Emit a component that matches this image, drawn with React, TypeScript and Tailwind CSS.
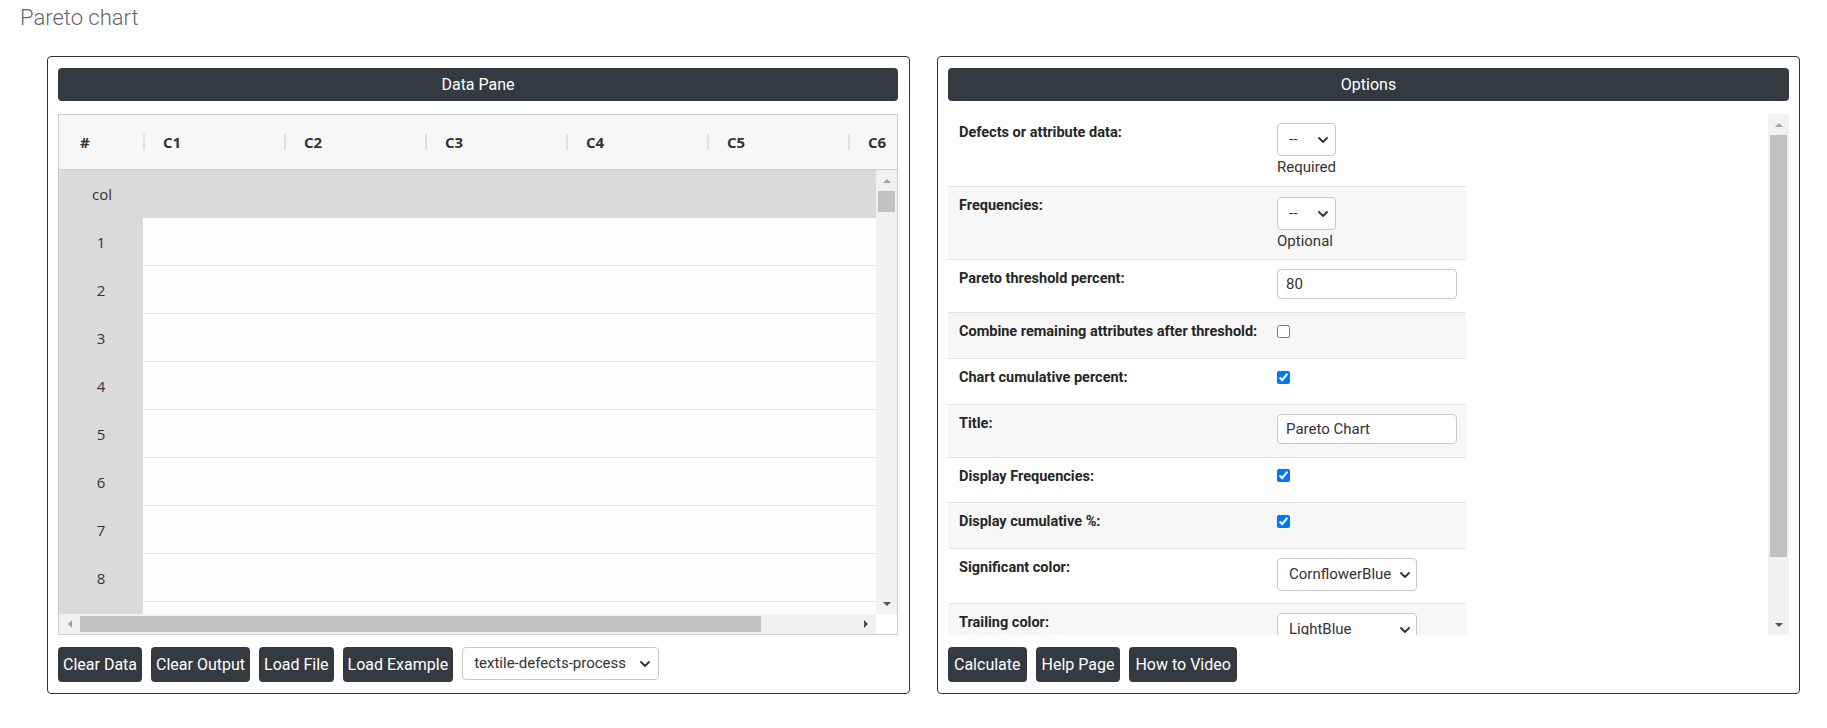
import React from "react";

function Chevron() {
  return (
    <svg width="10" height="6" viewBox="0 0 10 6" className="shrink-0">
      <path d="M1 1l4 4 4-4" fill="none" stroke="#333" strokeWidth="1.8" strokeLinecap="round" strokeLinejoin="round" />
    </svg>
  );
}

function SelectBox({ text, className }: { text: string; className: string }) {
  return (
    <div
      className={`flex items-center justify-between h-[33px] border border-[#c8c8c8] rounded-[4px] bg-white pl-[11px] text-[15px] text-[#333] ${className}`}
    >
      <span>{text}</span>
      <Chevron />
    </div>
  );
}

function TextBox({ value }: { value: string }) {
  return (
    <input
      readOnly
      defaultValue={value}
      className="block w-[180px] h-[30px] border border-[#c8c8c8] rounded-[4px] bg-white pl-[8px] text-[15px] text-[#333] outline-none font-['Roboto',sans-serif]"
    />
  );
}

function Check({ on }: { on: boolean }) {
  return <input type="checkbox" defaultChecked={on} className="block m-0 w-[13px] h-[13px]" />;
}

function DarkButton({ children, tight }: { children: React.ReactNode; tight?: boolean }) {
  return (
    <button
      className={`h-[35px] ${tight ? "px-[5px]" : "px-[6px]"} rounded-[4px] bg-[#343a40] text-white text-[16px] leading-none whitespace-nowrap`}
    >
      {children}
    </button>
  );
}

function UpArrow() {
  return <span className="w-0 h-0 border-x-[4px] border-x-transparent border-b-[4px] border-b-[#a3a3a3]" />;
}
function DownArrow() {
  return <span className="w-0 h-0 border-x-[4px] border-x-transparent border-t-[4px] border-t-[#505050]" />;
}
function LeftArrow() {
  return <span className="w-0 h-0 border-y-[4px] border-y-transparent border-r-[4px] border-r-[#a3a3a3]" />;
}
function RightArrow() {
  return <span className="w-0 h-0 border-y-[4px] border-y-transparent border-l-[4px] border-l-[#505050]" />;
}

function PanelHeader({ title }: { title: string }) {
  return (
    <div className="h-[33px] shrink-0 rounded-[4px] bg-[#343a40] text-white text-[16px] flex items-center justify-center">
      {title}
    </div>
  );
}

const columns = ["C1", "C2", "C3", "C4", "C5", "C6"];
const rowNumbers = [1, 2, 3, 4, 5, 6, 7, 8];

function DataGrid() {
  return (
    <div className="mt-[13px] h-[521px] border border-[#ccc] flex flex-col font-['Open_Sans',sans-serif] text-[#333]">
      {/* column headers */}
      <div className="h-[55px] shrink-0 border-b border-[#ccc] bg-[#f7f7f7] flex items-center overflow-hidden">
        <div className="w-[84px] shrink-0 pl-[21px] text-[15px] font-bold">#</div>
        {columns.map((c) => (
          <div key={c} className="w-[141px] shrink-0 flex items-center">
            <span className="w-[2px] h-[16px] bg-[#e0e0e0]" />
            <span className="ml-[18px] text-[15px] font-bold">{c}</span>
          </div>
        ))}
      </div>
      {/* rows + vertical scrollbar */}
      <div className="h-[444px] shrink-0 flex">
        <div className="flex-1 flex flex-col overflow-hidden">
          <div className="h-[48px] shrink-0 bg-[#dadada] flex items-center">
            <div className="w-[86px] text-center text-[15px]">col</div>
          </div>
          {rowNumbers.map((n) => (
            <div key={n} className="h-[48px] shrink-0 flex">
              <div className="w-[84px] shrink-0 bg-[#dadada] flex items-center justify-center text-[15px]">{n}</div>
              <div className="flex-1 bg-[#fdfdfd] border-b border-[#e4e4e4]" />
            </div>
          ))}
          <div className="flex-1 flex">
            <div className="w-[84px] shrink-0 bg-[#dadada]" />
            <div className="flex-1 bg-[#fdfdfd]" />
          </div>
        </div>
        <div className="w-[21px] shrink-0 bg-[#f1f1f1] flex flex-col">
          <div className="h-[21px] flex items-center justify-center">
            <UpArrow />
          </div>
          <div className="h-[21px] mx-[2px] bg-[#c1c1c1]" />
          <div className="flex-1" />
          <div className="h-[21px] flex items-center justify-center">
            <DownArrow />
          </div>
        </div>
      </div>
      {/* horizontal scrollbar */}
      <div className="flex-1 flex">
        <div className="flex-1 bg-[#f1f1f1] flex items-stretch">
          <div className="w-[21px] flex items-center justify-center">
            <LeftArrow />
          </div>
          <div className="w-[681px] my-[2px] bg-[#c1c1c1]" />
          <div className="flex-1" />
          <div className="w-[21px] flex items-center justify-center">
            <RightArrow />
          </div>
        </div>
        <div className="w-[21px] bg-white" />
      </div>
    </div>
  );
}

function OptRow({
  label,
  rowClass,
  controlClass,
  children,
}: {
  label: string;
  rowClass: string;
  controlClass: string;
  children: React.ReactNode;
}) {
  return (
    <div className={`flex shrink-0 ${rowClass}`}>
      <div className="w-[329px] shrink-0 pl-[11px] pt-[8px] text-[14.5px] leading-[21px] font-bold text-[#262626]">
        {label}
      </div>
      <div className={`flex-1 ${controlClass}`}>{children}</div>
    </div>
  );
}

function OptionsList() {
  return (
    <div className="mt-[13px] h-[521px] flex overflow-hidden">
      <div className="w-[518px] shrink-0 flex flex-col overflow-hidden">
        <OptRow label="Defects or attribute data:" rowClass="h-[72px] bg-white" controlClass="pt-[9px]">
          <SelectBox text="--" className="w-[59px] pr-[7px]" />
          <div className="text-[15px] leading-[22px] text-[#333]">Required</div>
        </OptRow>
        <OptRow label="Frequencies:" rowClass="h-[73px] border-t border-[#e3e3e3] bg-[#f7f7f7]" controlClass="pt-[10px]">
          <SelectBox text="--" className="w-[59px] pr-[7px]" />
          <div className="text-[15px] leading-[22px] text-[#333]">Optional</div>
        </OptRow>
        <OptRow label="Pareto threshold percent:" rowClass="h-[53px] border-t border-[#e3e3e3] bg-white" controlClass="pt-[9px]">
          <TextBox value="80" />
        </OptRow>
        <OptRow
          label="Combine remaining attributes after threshold:"
          rowClass="h-[46px] border-t border-[#e3e3e3] bg-[#f7f7f7]"
          controlClass="pt-[12px]"
        >
          <Check on={false} />
        </OptRow>
        <OptRow label="Chart cumulative percent:" rowClass="h-[46px] border-t border-[#e3e3e3] bg-white" controlClass="pt-[12px]">
          <Check on={true} />
        </OptRow>
        <OptRow label="Title:" rowClass="h-[53px] border-t border-[#e3e3e3] bg-[#f7f7f7]" controlClass="pt-[9px]">
          <TextBox value="Pareto Chart" />
        </OptRow>
        <OptRow label="Display Frequencies:" rowClass="h-[45px] border-t border-[#e3e3e3] bg-white" controlClass="pt-[11px]">
          <Check on={true} />
        </OptRow>
        <OptRow label="Display cumulative %:" rowClass="h-[46px] border-t border-[#e3e3e3] bg-[#f7f7f7]" controlClass="pt-[12px]">
          <Check on={true} />
        </OptRow>
        <OptRow label="Significant color:" rowClass="h-[55px] border-t border-[#e3e3e3] bg-white" controlClass="pt-[9px]">
          <SelectBox text="CornflowerBlue" className="w-[140px] pr-[6px]" />
        </OptRow>
        <OptRow label="Trailing color:" rowClass="h-[60px] border-t border-[#e3e3e3] bg-[#f7f7f7]" controlClass="pt-[9px]">
          <SelectBox text="LightBlue" className="w-[140px] pr-[6px]" />
        </OptRow>
      </div>
      <div className="flex-1" />
      <div className="w-[21px] shrink-0 bg-[#f1f1f1] flex flex-col">
        <div className="h-[21px] flex items-center justify-center">
          <UpArrow />
        </div>
        <div className="h-[422px] mx-[2px] bg-[#c1c1c1]" />
        <div className="flex-1" />
        <div className="h-[21px] flex items-center justify-center">
          <DownArrow />
        </div>
      </div>
    </div>
  );
}

export default function App() {
  return (
    <div className="w-[1827px] h-[728px] bg-white overflow-hidden font-['Roboto',sans-serif]">
      <div className="h-[56px] pl-[20px] pt-[3px] text-[22px] leading-[30px] font-light text-[#666]">Pareto chart</div>
      <div className="flex gap-[27px] pl-[47px]">
        {/* data entry panel */}
        <div className="w-[863px] h-[638px] shrink-0 border border-[#333] rounded-[4px] pl-[10px] pr-[11px] pt-[11px] flex flex-col">
          <PanelHeader title="Data Pane" />
          <DataGrid />
          <div className="mt-[12px] flex items-start gap-[9px]">
            <DarkButton tight>Clear Data</DarkButton>
            <DarkButton tight>Clear Output</DarkButton>
            <DarkButton tight>Load File</DarkButton>
            <DarkButton tight>Load Example</DarkButton>
            <SelectBox text="textile-defects-process" className="w-[197px] pr-[8px]" />
          </div>
        </div>
        {/* options panel */}
        <div className="w-[863px] h-[638px] shrink-0 border border-[#333] rounded-[4px] pl-[10px] pr-[10px] pt-[11px] flex flex-col">
          <PanelHeader title="Options" />
          <OptionsList />
          <div className="mt-[12px] flex items-start gap-[9px]">
            <DarkButton>Calculate</DarkButton>
            <DarkButton>Help Page</DarkButton>
            <DarkButton>How to Video</DarkButton>
          </div>
        </div>
      </div>
    </div>
  );
}
